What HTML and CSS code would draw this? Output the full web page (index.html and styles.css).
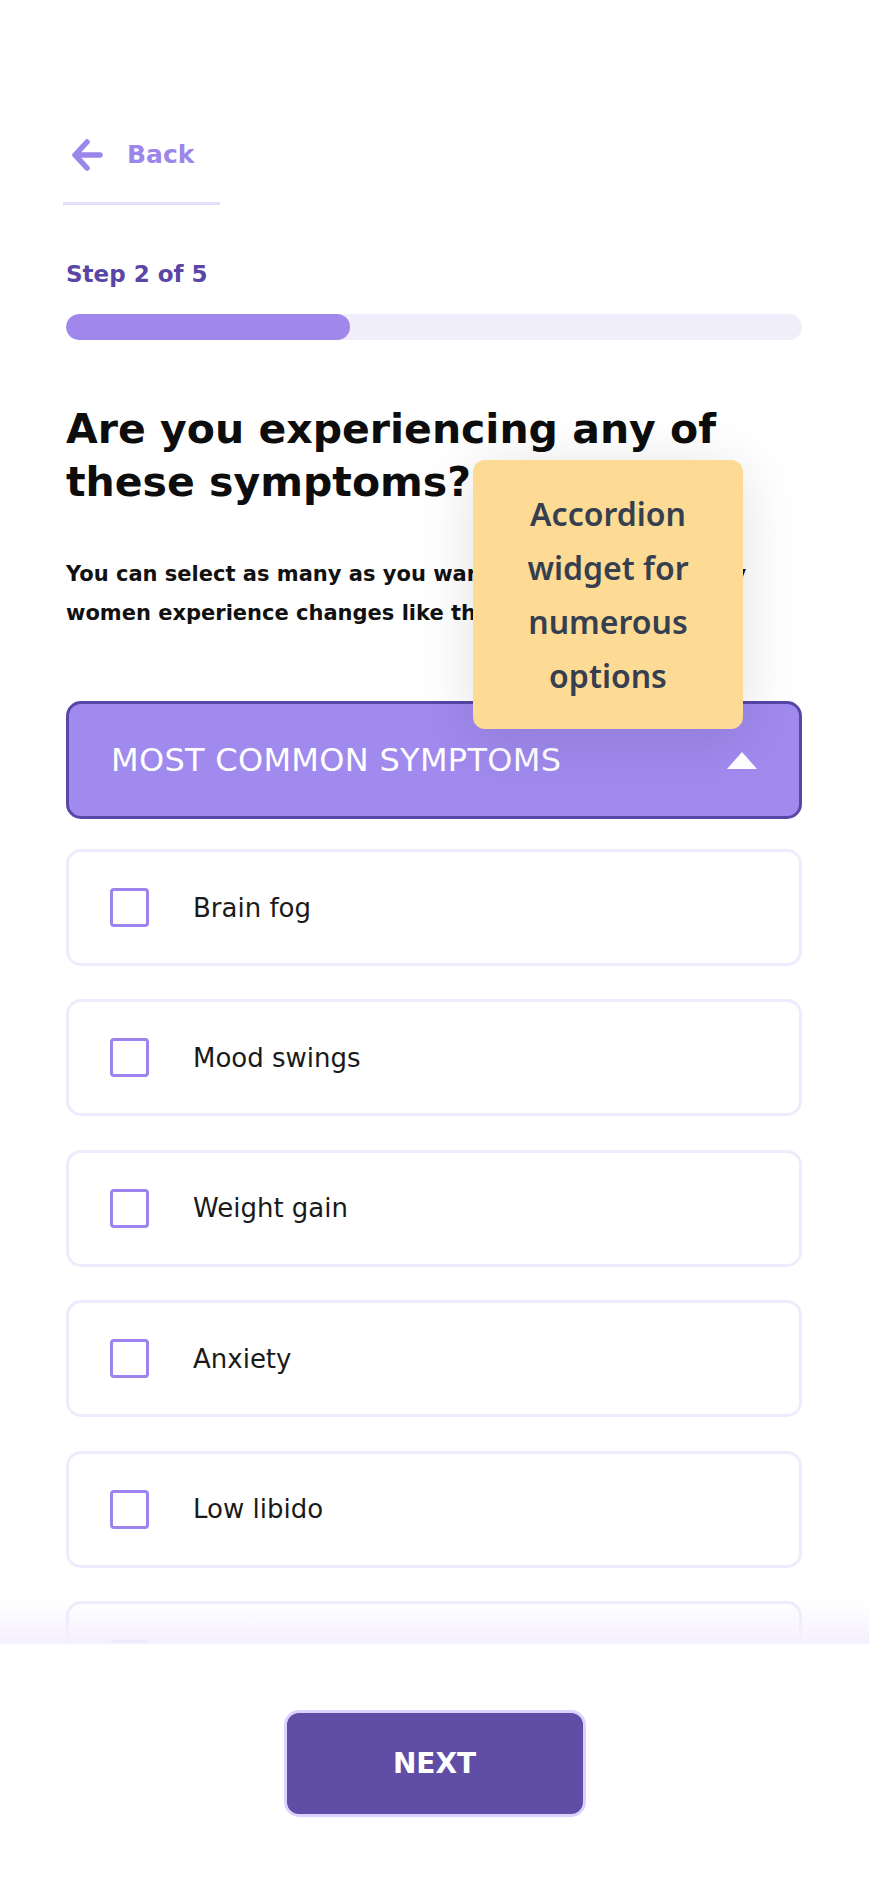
FILE: index.html
```html
<!DOCTYPE html>
<html lang="en">
<head>
  <meta charset="UTF-8" />
  <meta name="viewport" content="width=device-width, initial-scale=1.0"/>
  <title>Symptoms - Step 2 of 5</title>
  <link rel="stylesheet" href="styles.css">
</head>
<body>

<div class="page">
  <a class="back" href="#">
    <svg class="back-icon" viewBox="0 0 32 34" width="32" height="34">
      <path d="M29 17H4M16 4L4 17L16 30" fill="none" stroke="currentColor" stroke-width="5.5" stroke-linecap="round" stroke-linejoin="round"/>
    </svg>
    <span>Back</span>
  </a>

  <div class="step">Step 2 of 5</div>
  <div class="progress">
    <div class="progress-fill" style="width: 38.6%"></div>
  </div>

  <h1>Are you experiencing any of these symptoms?</h1>
  <p class="intro">You can select as many as you want. Remember, so many<br>women experience changes like these.</p>

  <div class="accordion">
    <button type="button" class="accordion-head">
      <span>MOST COMMON SYMPTOMS</span>
      <i class="caret"></i>
    </button>

    <div class="options">
      <label class="option"><span class="box"></span>Brain fog</label>
      <label class="option"><span class="box"></span>Mood swings</label>
      <label class="option"><span class="box"></span>Weight gain</label>
      <label class="option"><span class="box"></span>Anxiety</label>
      <label class="option"><span class="box"></span>Low libido</label>
      <label class="option"><span class="box"></span>Hot flushes</label>
    </div>
  </div>

  <div class="note">Accordion widget for numerous options</div>
</div>

<div class="footer">
  <button type="button" class="next-btn">NEXT</button>
</div>

</body>
</html>
```

FILE: styles.css
```css
* { box-sizing: border-box; }

html, body {
  margin: 0;
  height: 100%;
  overflow: hidden;
}

body {
  font-family: "DejaVu Sans", sans-serif;
  background: #fff;
  color: #111;
}

.page {
  position: relative;
  padding: 138px 67px 0 66px;
}

.back {
  display: inline-flex;
  align-items: center;
  gap: 24px;
  margin-left: -3px;
  padding: 0 26px 30px 8px;
  border-bottom: 3px solid #e4ddfb;
  color: #9b86ea;
  text-decoration: none;
  font-weight: bold;
  font-size: 25px;
  line-height: 34px;
}

.back-icon { display: block; }

.step {
  margin-top: 55px;
  font-weight: bold;
  font-size: 23px;
  line-height: 28px;
  color: #5a46a6;
}

.progress {
  margin-top: 26px;
  height: 26px;
  border-radius: 13px;
  background: #f1eefb;
  overflow: hidden;
}

.progress-fill {
  height: 100%;
  border-radius: 13px;
  background: #9f87ec;
}

h1 {
  margin: 63px 0 0;
  font-size: 41px;
  line-height: 53px;
  font-weight: bold;
  color: #0d0d0d;
}

.intro {
  margin: 46px 0 0;
  font-size: 21px;
  line-height: 39px;
  font-weight: bold;
  color: #111;
  white-space: nowrap;
}

.accordion { margin-top: 68px; }

.accordion-head {
  width: 100%;
  height: 118px;
  display: flex;
  align-items: center;
  justify-content: space-between;
  padding: 0 42px 0 42px;
  background: #a08aee;
  border: 3px solid #5946a8;
  border-radius: 15px;
  font-family: inherit;
  font-size: 32px;
  letter-spacing: 0.3px;
  color: #fff;
  cursor: pointer;
}

.caret {
  width: 0;
  height: 0;
  border-left: 15.5px solid transparent;
  border-right: 15.5px solid transparent;
  border-bottom: 17px solid #fff;
}

.options {
  display: flex;
  flex-direction: column;
  gap: 33.4px;
  margin-top: 30px;
}

.option {
  height: 117px;
  display: flex;
  align-items: center;
  gap: 44px;
  padding-left: 41px;
  border: 3px solid #efebfc;
  border-radius: 15px;
  font-size: 26px;
  color: #1a1a1a;
}

.box {
  width: 39px;
  height: 39px;
  border: 3px solid #9c83ee;
  border-radius: 4px;
  flex-shrink: 0;
}

.note {
  position: absolute;
  left: 473px;
  top: 460px;
  width: 270px;
  height: 269px;
  padding: 27px 20px;
  background: #fddb95;
  border-radius: 12px;
  box-shadow: 0 8px 60px rgba(0, 0, 0, 0.12);
  font-family: "Noto Sans", sans-serif;
  font-weight: 600;
  font-size: 32px;
  line-height: 54px;
  text-align: center;
  color: #363f50;
}

.footer {
  position: fixed;
  left: 0;
  right: 0;
  bottom: 0;
  height: 243px;
  padding-top: 66px;
  background: #fff;
  display: flex;
  justify-content: center;
  align-items: flex-start;
}

.footer::before {
  content: "";
  position: absolute;
  left: 0;
  right: 0;
  bottom: 100%;
  height: 44px;
  background: linear-gradient(to bottom, rgba(244, 240, 254, 0), #f4f0fe);
}

.next-btn {
  width: 302px;
  height: 107px;
  background: #604ea6;
  border: 3px solid #dcd2ff;
  border-radius: 15px;
  font-family: inherit;
  font-weight: bold;
  font-size: 28px;
  color: #fff;
  cursor: pointer;
}
```
